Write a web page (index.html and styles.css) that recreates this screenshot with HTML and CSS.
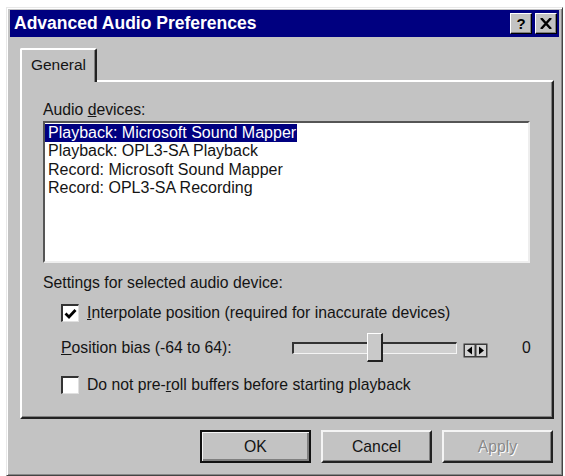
FILE: index.html
```html
<!DOCTYPE html>
<html>
<head>
<meta charset="utf-8">
<link rel="stylesheet" href="styles.css">
</head>
<body>
<div class="window">
  <div class="titlebar">
    <span class="title">Advanced Audio Preferences</span>
    <div class="tb-buttons">
      <span class="tb-btn">?</span>
      <span class="tb-btn">
        <svg width="12" height="11" viewBox="0 0 12 11"><path d="M1 0 L11 11 M11 0 L1 11" stroke="#000" stroke-width="2.4"/></svg>
      </span>
    </div>
  </div>
  <div class="content">
    <div class="tabs">
      <div class="tab">General</div>
    </div>
    <div class="panel">
      <div class="label">Audio <u>d</u>evices:</div>
      <div class="listbox">
        <div class="item selected">Playback: Microsoft Sound Mapper</div>
        <div class="item">Playback: OPL3-SA Playback</div>
        <div class="item">Record: Microsoft Sound Mapper</div>
        <div class="item">Record: OPL3-SA Recording</div>
      </div>
      <div class="section-label">Settings for selected audio device:</div>
      <div class="check-row first">
        <span class="checkbox">
          <svg width="13" height="12" viewBox="0 0 13 12"><path d="M1.5 5.5 L5 9 L11.5 2" fill="none" stroke="#000" stroke-width="2.8"/></svg>
        </span>
        <span class="check-text"><u>I</u>nterpolate position (required for inaccurate devices)</span>
      </div>
      <div class="slider-row">
        <span class="slider-label"><u>P</u>osition bias (-64 to 64):</span>
        <div class="slider">
          <div class="track"></div>
          <div class="thumb"></div>
        </div>
        <span class="spin">
          <svg width="25" height="15" viewBox="0 0 25 15">
            <rect x="0.5" y="0.5" width="24" height="14" fill="#3a3a3a"/>
            <rect x="2" y="2" width="9.5" height="11" fill="#d4d4d4"/>
            <rect x="13.5" y="2" width="9.5" height="11" fill="#d4d4d4"/>
            <path d="M9 3.5 L4 7.5 L9 11.5 Z" fill="#000"/>
            <path d="M16 3.5 L21 7.5 L16 11.5 Z" fill="#000"/>
          </svg>
        </span>
        <span class="value">0</span>
      </div>
      <div class="check-row second">
        <span class="checkbox"></span>
        <span class="check-text">Do not pre-<u>r</u>oll buffers before starting playback</span>
      </div>
    </div>
    <div class="buttons">
      <button class="btn default">OK</button>
      <button class="btn">Cancel</button>
      <button class="btn disabled">Apply</button>
    </div>
  </div>
</div>
</body>
</html>
```

FILE: styles.css
```css
html, body {
  margin: 0;
  padding: 0;
  background: #ffffff;
}
body {
  font-family: "Liberation Sans", Arial, sans-serif;
  font-size: 15.75px;
  color: #141414;
}
.window {
  box-sizing: border-box;
  margin: 7px 0 0 6px;
  width: 557px;
  height: 469px;
  background: #c3c3c3;
  border-top: 1px solid #e8e8e8;
  border-left: 1px solid #e8e8e8;
  border-right: 1px solid #444;
  border-bottom: 1px solid #444;
  box-shadow: inset 1px 1px 0 #fff, inset -1px -1px 0 #888;
  padding: 2px 3px 0 3px;
}
.titlebar {
  height: 27px;
  background: #000080;
  display: flex;
  align-items: center;
  justify-content: space-between;
}
.title {
  color: #fff;
  font-weight: bold;
  font-size: 17.5px;
  padding-left: 4px;
}
.tb-buttons {
  display: flex;
  gap: 3px;
  margin-right: 2px;
}
.tb-btn {
  box-sizing: border-box;
  width: 22px;
  height: 21px;
  background: #c3c3c3;
  border-top: 1px solid #fff;
  border-left: 1px solid #fff;
  border-right: 1px solid #000;
  border-bottom: 1px solid #000;
  box-shadow: inset -1px -1px 0 #808080;
  display: flex;
  align-items: center;
  justify-content: center;
  font-weight: bold;
  font-size: 15px;
  color: #000;
}
.content {
  padding: 11px 5px 0 10px;
}
.tabs {
  display: flex;
  height: 32px;
  position: relative;
  z-index: 1;
}
.tab {
  box-sizing: border-box;
  width: 77px;
  height: 34px;
  background: #c3c3c3;
  border-top: 2px solid #fff;
  border-left: 2px solid #fff;
  border-right: 2px solid #222;
  border-radius: 2px 2px 0 0;
  box-shadow: inset -1px 0 0 #808080;
  display: flex;
  align-items: center;
  justify-content: center;
  padding-bottom: 2px;
  font-size: 15.5px;
}
.panel {
  box-sizing: border-box;
  height: 339px;
  border-top: 2px solid #fff;
  border-left: 2px solid #fff;
  border-right: 2px solid #222;
  border-bottom: 2px solid #222;
  box-shadow: inset -1px -1px 0 #808080;
  padding: 19px 20px 0 21px;
}
.label {
  line-height: 18px;
}
.listbox {
  box-sizing: border-box;
  margin-top: 2px;
  width: 487px;
  height: 142px;
  background: #fff;
  border-top: 2px solid #555;
  border-left: 2px solid #555;
  border-right: 2px solid #eee;
  border-bottom: 2px solid #eee;
  padding: 1px 0;
}
.item {
  font-size: 16px;
  line-height: 18.4px;
  padding-left: 3px;
  width: 249px;
  white-space: nowrap;
  color: #141414;
}
.item.selected {
  background: #000080;
  color: #fff;
}
.section-label {
  margin-top: 11px;
  line-height: 18px;
}
.check-row {
  display: flex;
  align-items: center;
  height: 20px;
  margin-left: 18px;
}
.check-row.first {
  margin-top: 11px;
}
.check-row.second {
  margin-top: 12px;
}
.checkbox {
  box-sizing: border-box;
  flex-shrink: 0;
  width: 18px;
  height: 18px;
  background: #fff;
  border-top: 2px solid #333;
  border-left: 2px solid #333;
  border-right: 1px solid #e0e0e0;
  border-bottom: 1px solid #e0e0e0;
  display: flex;
  align-items: center;
  justify-content: center;
  margin-right: 8px;
}
.slider-row {
  display: flex;
  align-items: center;
  height: 30px;
  margin-top: 10px;
  margin-left: 18px;
}
.slider-label {
  flex-shrink: 0;
  width: 231px;
}
.slider {
  flex-shrink: 0;
  position: relative;
  width: 165px;
  height: 30px;
  display: flex;
  align-items: center;
}
.track {
  box-sizing: border-box;
  width: 165px;
  height: 12px;
  background: #d0d0d0;
  border-top: 2px solid #333;
  border-left: 2px solid #333;
  border-right: 1px solid #f4f4f4;
  border-bottom: 1px solid #f4f4f4;
}
.thumb {
  position: absolute;
  left: 75px;
  top: 0;
  box-sizing: border-box;
  width: 16px;
  height: 29px;
  background: #c9c9c9;
  border-top: 1px solid #fff;
  border-left: 1px solid #fff;
  border-right: 2px solid #222;
  border-bottom: 2px solid #222;
}
.spin {
  flex-shrink: 0;
  display: flex;
  margin-left: 6px;
  margin-top: 4px;
}
.value {
  flex-shrink: 0;
  margin-left: 34px;
}
.buttons {
  display: flex;
  justify-content: flex-end;
  gap: 10px;
  margin-top: 11px;
  padding-right: 1px;
}
.btn {
  box-sizing: border-box;
  width: 111px;
  height: 33px;
  background: #c3c3c3;
  font-family: "Liberation Sans", Arial, sans-serif;
  font-size: 15.75px;
  color: #141414;
  border-top: 2px solid #f4f4f4;
  border-left: 2px solid #f4f4f4;
  border-right: 2px solid #222;
  border-bottom: 2px solid #222;
  box-shadow: inset -1px -1px 0 #808080;
  padding: 0;
}
.btn.default {
  border: 2px solid #111;
  box-shadow: inset 1px 1px 0 #f4f4f4, inset -2px -2px 0 #808080;
}
.btn.disabled {
  color: #8a8a8a;
  text-shadow: 1px 1px 0 #fff;
}
```
